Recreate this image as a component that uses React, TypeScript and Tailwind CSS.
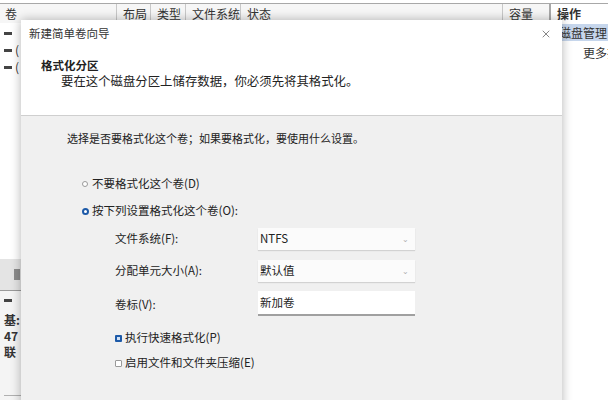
import { X } from 'lucide-react';

const font = { fontFamily: '"Noto Sans CJK SC", "Noto Sans", sans-serif' };

const Radio = ({ checked }: { checked?: boolean }) =>
  checked ? (
    <span className="inline-block h-[7px] w-[7px] rounded-full border-[2px] border-[#1d5aa8] bg-white" />
  ) : (
    <span className="inline-block h-[6px] w-[6px] rounded-full border border-[#9a9a9a] bg-white" />
  );

const Check = ({ checked }: { checked?: boolean }) =>
  checked ? (
    <span className="inline-flex h-[7px] w-[7px] items-center justify-center rounded-[1px] bg-[#1d5aa8]">
      <span className="h-[3px] w-[3px] bg-[#cfe0f5]" />
    </span>
  ) : (
    <span className="inline-block h-[7px] w-[7px] rounded-[1px] border border-[#9a9a9a] bg-white" />
  );

const Select = ({ value }: { value: string }) => (
  <div className="flex h-[22px] w-[157px] items-center justify-between bg-[#fbfbfb] pl-[2px] pr-[6px] shadow-[0_1px_1px_rgba(0,0,0,0.12)]">
    <span>{value}</span>
    <span className="text-[8px] leading-none text-[#b0b0b0]">⌄</span>
  </div>
);

const Background = () => {
  const cols = [
    { label: '卷', w: 'w-[116px]', first: true },
    { label: '布局', w: 'w-[34px]' },
    { label: '类型', w: 'w-[35px]' },
    { label: '文件系统', w: 'w-[55px]' },
    { label: '状态', w: 'w-[262px]' },
    { label: '容量', w: 'w-[47px]' },
  ];

  return (
    <div className="flex h-full">
      <div className="flex w-[549px] flex-col">
        <div className="mt-[3px] flex h-[20px] border-t border-[#a8a8a8] bg-[#f6f6f6] text-[12px] text-[#333]">
          {cols.map((c) => (
            <div
              key={c.label}
              className={`${c.w} flex items-center ${c.first ? 'pl-[5px]' : 'border-l border-[#c8c8c8] pl-[6px]'}`}
            >
              {c.label}
            </div>
          ))}
        </div>
        <div className="flex h-[236px] flex-col gap-[3px] bg-white pl-[4px] pt-[3px] text-[12px] text-[#333]">
          <div className="flex h-[14px] items-center">
            <span className="h-[3px] w-[8px] bg-[#444]" />
          </div>
          <div className="flex h-[14px] items-center gap-[3px]">
            <span className="h-[3px] w-[8px] bg-[#444]" />
            <span>(</span>
          </div>
          <div className="flex h-[14px] items-center gap-[3px]">
            <span className="h-[3px] w-[8px] bg-[#444]" />
            <span>(</span>
          </div>
        </div>
        <div className="flex h-[32px] items-center border-b border-[#9a9a9a] bg-[#e4e4e4] pl-[14px]">
          <span className="h-[11px] w-[6px] bg-[#8c8c8c]" />
        </div>
        <div className="flex flex-1 flex-col bg-[#f4f4f4] pl-[4px] pt-[8px] text-[12px] font-semibold leading-[16px] text-[#333]">
          <span className="mb-[10px] h-[3px] w-[8px] bg-[#444]" />
          <span>基:</span>
          <span>47</span>
          <span>联</span>
          <div className="mt-auto mb-[4px] h-px bg-[#b0b0b0]" />
        </div>
      </div>
      <div className="mt-[3px] flex flex-1 flex-col border-l-2 border-t border-[#a8a8a8] bg-white text-[12px] text-[#333]">
        <div className="flex h-[20px] items-center pl-[6px] font-bold">操作</div>
        <div className="flex h-[17px] items-center bg-[#c6d6ec] pl-[8px]">磁盘管理</div>
        <div className="flex h-[24px] items-center overflow-hidden pl-[32px] whitespace-nowrap">更多操</div>
      </div>
    </div>
  );
};

const Dialog = () => (
  <div className="absolute left-[21px] top-[20px] flex h-[390px] w-[541px] flex-col bg-[#f0f0f0] text-[11.5px] text-[#222] shadow-[0_0_10px_rgba(0,0,0,0.3)]">
    <div className="flex h-[96px] flex-col border-b border-[#cfcfcf] bg-white">
      <div className="flex h-[26px] items-center justify-between pl-[8px] pr-[10px] pt-[1px]">
        <span className="text-[11.5px] text-[#333]">新建简单卷向导</span>
        <X className="h-[12px] w-[12px] text-[#444]" strokeWidth={1.3} />
      </div>
      <div className="mt-[11px] pl-[20px] text-[11.5px] font-bold leading-[16px]">格式化分区</div>
      <div className="pl-[40px] text-[12.4px] leading-[17px]">要在这个磁盘分区上储存数据，你必须先将其格式化。</div>
    </div>

    <div className="flex flex-col pl-[46px] pt-[14px]">
      <div className="text-[11px] leading-[16px]">选择是否要格式化这个卷；如果要格式化，要使用什么设置。</div>

      <div className="mt-[30px] flex h-[16px] items-center gap-[4px] pl-[15px]">
        <Radio />
        <span>不要格式化这个卷(D)</span>
      </div>
      <div className="mt-[11px] flex h-[16px] items-center gap-[3px] pl-[15px]">
        <Radio checked />
        <span>按下列设置格式化这个卷(O):</span>
      </div>

      <div className="mt-[9px] flex flex-col pl-[48px]">
        <div className="flex h-[22px] items-center">
          <span className="w-[143px]">文件系统(F):</span>
          <Select value="NTFS" />
        </div>
        <div className="mt-[10px] flex h-[22px] items-center">
          <span className="w-[143px]">分配单元大小(A):</span>
          <Select value="默认值" />
        </div>
        <div className="mt-[8px] flex h-[26px] items-center">
          <span className="w-[143px] pt-[4px]">卷标(V):</span>
          <div className="flex h-[25px] w-[157px] items-start border-b-2 border-[#a0a0a0] bg-white pl-[2px] pt-[3px]">
            新加卷
          </div>
        </div>
        <div className="mt-[14px] flex h-[16px] items-center gap-[3px]">
          <Check checked />
          <span>执行快速格式化(P)</span>
        </div>
        <div className="mt-[9px] flex h-[16px] items-center gap-[3px]">
          <Check />
          <span>启用文件和文件夹压缩(E)</span>
        </div>
      </div>
    </div>
  </div>
);

export default function App() {
  return (
    <div className="relative h-[400px] w-[608px] overflow-hidden bg-white" style={font}>
      <Background />
      <Dialog />
    </div>
  );
}
